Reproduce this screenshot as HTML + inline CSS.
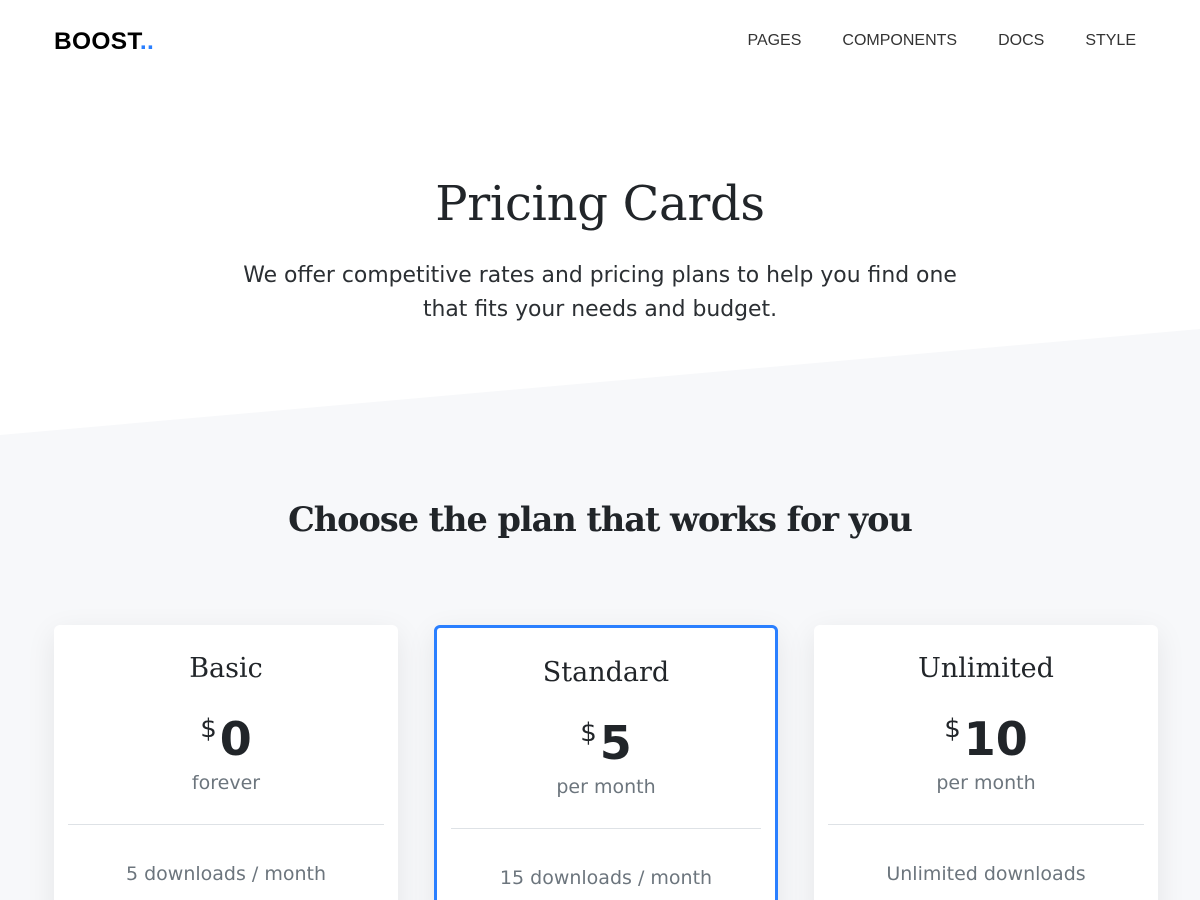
<!DOCTYPE html>
<html><head><style>
*{margin:0;padding:0;box-sizing:border-box}
html,body{width:1200px;height:900px;overflow:hidden}
body{background:#fff;font-family:"Liberation Sans",sans-serif;color:#212529;position:relative}
.bg{position:absolute;left:0;top:0;width:1200px;height:900px;background:#f7f8fa;clip-path:polygon(0 435px,1200px 329px,1200px 900px,0 900px)}
.logo{position:absolute;left:54px;top:28px;font-weight:bold;font-size:24.5px;letter-spacing:0.3px;color:#000}
.logo span{color:#2a7fff}
nav{position:absolute;top:32px;right:64px;font-size:16px;color:#333}
nav a{margin-left:41px}
h1{position:absolute;top:176px;width:100%;text-align:center;font-family:"DejaVu Serif","Liberation Serif",serif;font-weight:normal;font-size:48px;letter-spacing:-0.3px}
.sub{position:absolute;top:259px;width:100%;text-align:center;line-height:34px;color:#2b2f33;font-family:"DejaVu Sans","Liberation Sans",sans-serif;font-size:21.9px}
h2{position:absolute;top:500px;width:100%;text-align:center;font-family:"DejaVu Serif","Liberation Serif",serif;font-weight:bold;font-size:33.5px;letter-spacing:-1px}
.card{position:absolute;top:625px;width:344px;height:300px;background:#fff;border-radius:6px;box-shadow:0 8px 30px rgba(0,0,0,0.08);text-align:center}
.card.s{border:3px solid #2a7fff}
.t{font-family:"DejaVu Serif","Liberation Serif",serif;font-size:27px;margin-top:28px}
.p{font-size:46px;font-weight:bold;margin-top:20px;line-height:50px;font-family:"DejaVu Sans",sans-serif}
.p sup{font-size:26px;font-weight:normal;vertical-align:18px;margin-right:3px}
.f{color:#6c757d;font-size:19px;font-family:"DejaVu Sans",sans-serif;margin-top:8px}
hr{border:0;border-top:1px solid #dee2e6;margin:30px 14px 0}
.d{color:#6c757d;font-size:19px;font-family:"DejaVu Sans",sans-serif;margin-top:38px}
</style></head><body>
<div class="bg"></div>
<div class="logo">BOOST<span>..</span></div>
<nav><a>PAGES</a><a>COMPONENTS</a><a>DOCS</a><a>STYLE</a></nav>
<h1>Pricing Cards</h1>
<div class="sub">We offer competitive rates and pricing plans to help you find one<br>that fits your needs and budget.</div>
<h2>Choose the plan that works for you</h2>
<div class="card" style="left:54px"><div class="t">Basic</div><div class="p"><sup>$</sup>0</div><div class="f">forever</div><hr><div class="d">5 downloads / month</div></div>
<div class="card s" style="left:434px"><div class="t" style="margin-top:29px">Standard</div><div class="p"><sup>$</sup>5</div><div class="f">per month</div><hr><div class="d">15 downloads / month</div></div>
<div class="card" style="left:814px"><div class="t">Unlimited</div><div class="p"><sup>$</sup>10</div><div class="f">per month</div><hr><div class="d">Unlimited downloads</div></div>
</body></html>
